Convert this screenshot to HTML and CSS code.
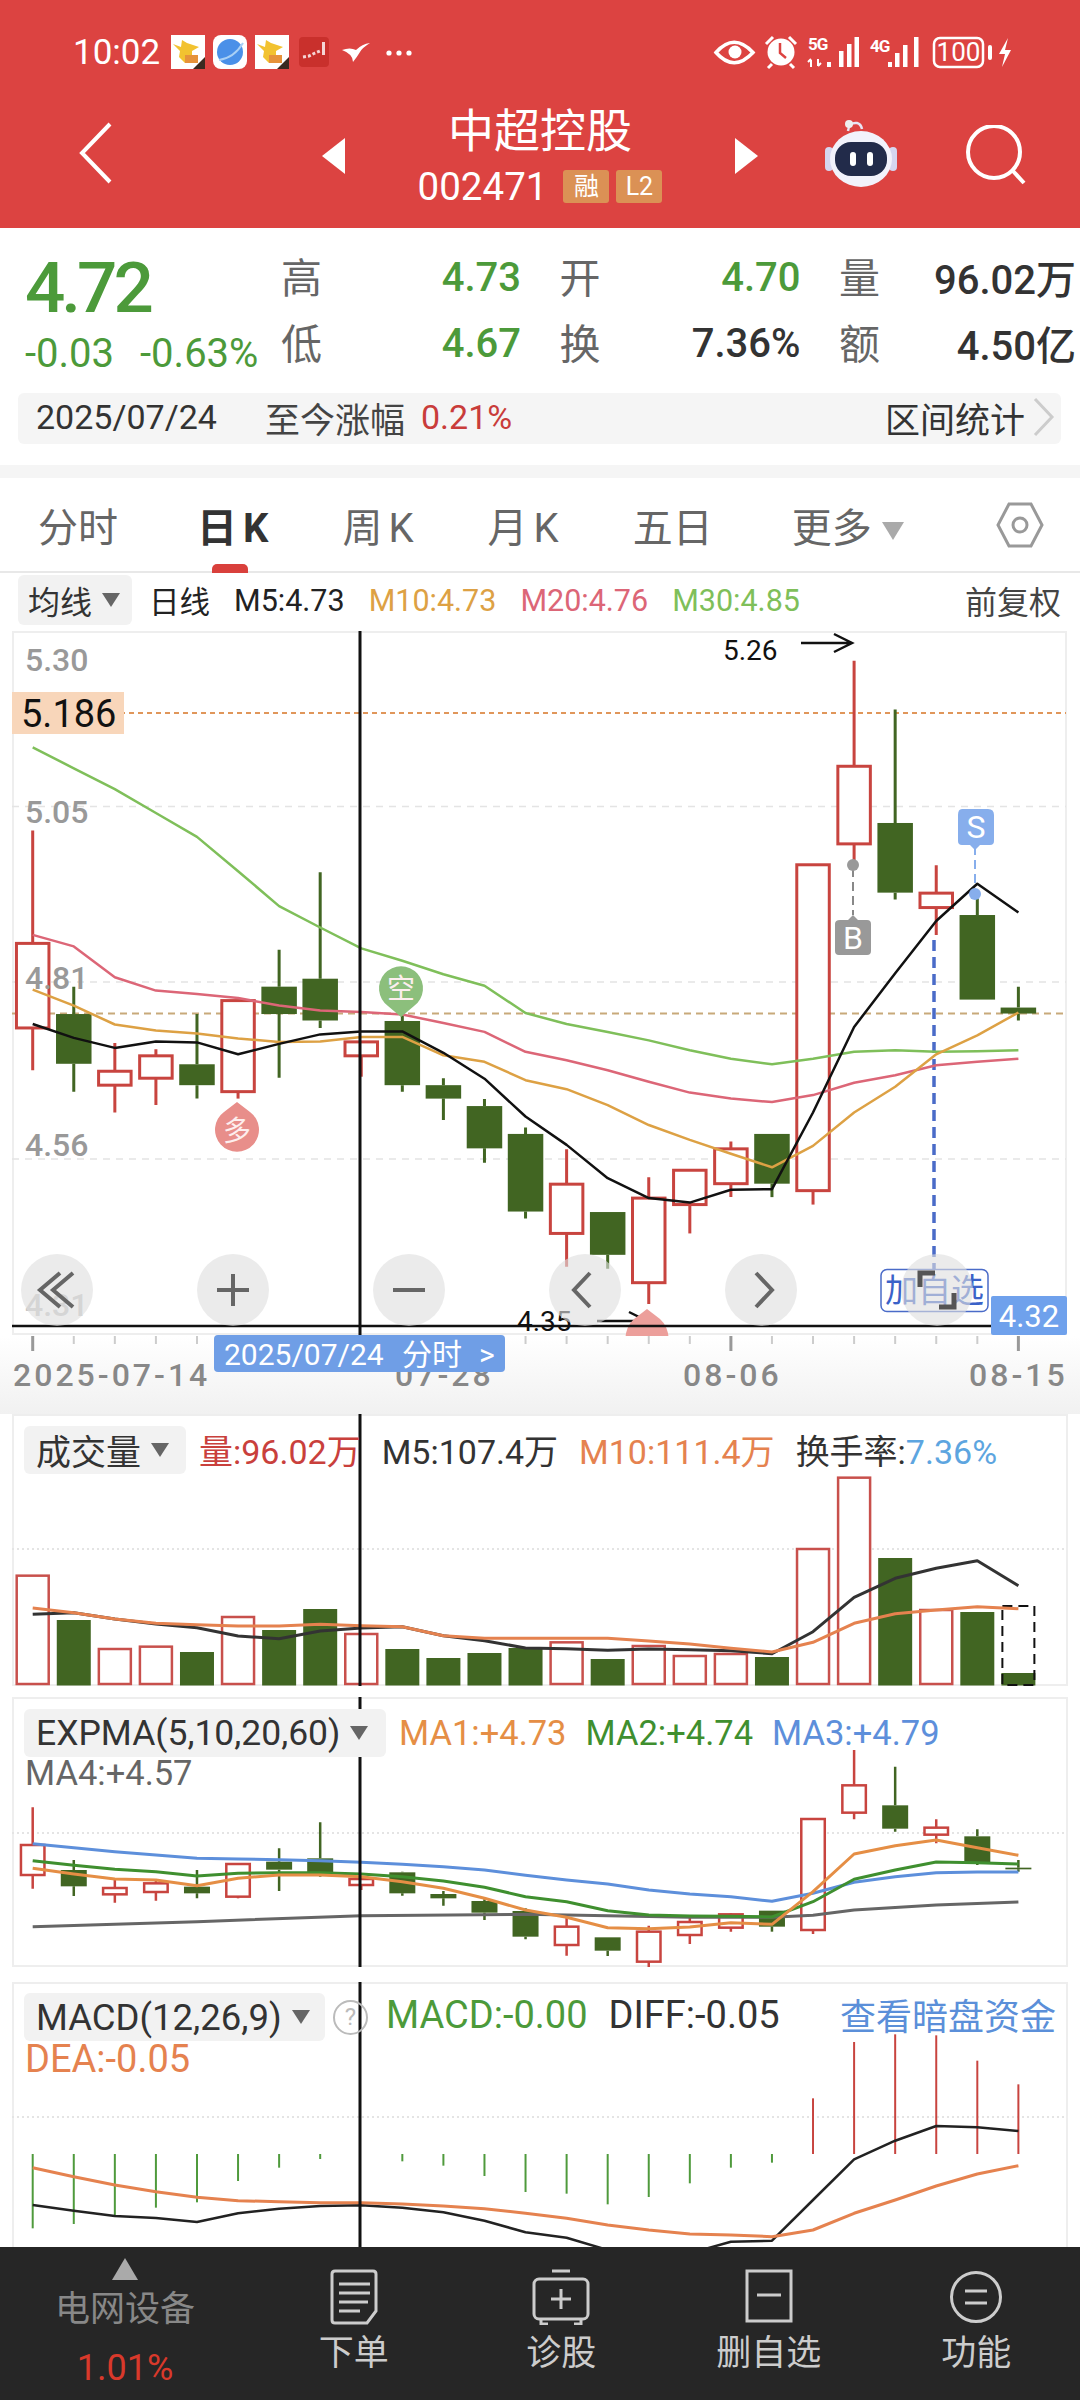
FILE: index.html
```html
<!DOCTYPE html>
<html lang="zh">
<head>
    <meta charset="utf-8">
    <title>中超控股</title>
    <link rel="stylesheet" href="styles.css">
</head>
<body>
<div id="page">
    <header class="top">
        <div class="status">
            <span class="clock">10:02</span>
            <svg class="app-icons" width="250" height="40" viewBox="0 0 250 40">
                <g id="roo">
                    <rect x="1" y="3" width="34" height="34" fill="#fff"/>
                    <path d="M3 12 L11 15 L12 8 L17 11 L29 15 L22 19 L22 24 L15 31 L9 25 L10 19 Z" fill="#f2c230"/>
                    <rect x="15" y="23" width="13" height="8" fill="#e6923a"/>
                    <path d="M35 37 L35 25 L23 37 Z" fill="#3a2a20"/>
                </g>
                <rect x="43" y="3" width="34" height="34" rx="8" fill="#fff"/>
                <circle cx="60" cy="20" r="13" fill="#4a90e8"/>
                <path d="M49 28 Q64 26 73 11" fill="none" stroke="#a9d0f5" stroke-width="2"/>
                <use href="#roo" x="84"/>
                <rect x="129" y="5" width="30" height="30" rx="4" fill="#c9302c"/>
                <path d="M133 25 L139 24 L145 21 L150 19" fill="none" stroke="#f5d5d5" stroke-width="3" stroke-dasharray="3 2"/>
                <rect x="152" y="10" width="3" height="13" fill="#f5d5d5"/>
                <path d="M172 18 Q180 15 186 18 Q192 12 200 11 Q192 16 190 20 Q187 25 183 30 Q183 22 172 18 Z" fill="#fff"/>
                <circle cx="219" cy="21" r="2.6" fill="#fff"/>
                <circle cx="229" cy="21" r="2.6" fill="#fff"/>
                <circle cx="239" cy="21" r="2.6" fill="#fff"/>
            </svg>
            <svg class="sys-icons" width="320" height="45" viewBox="0 0 320 45">
                <path d="M11 22.5 Q29 2 48 22.5 Q29 43 11 22.5 Z" fill="none" stroke="#fff" stroke-width="3.5"/>
                <circle cx="30" cy="22" r="6.5" fill="#fff"/>
                <circle cx="76" cy="22" r="13.5" fill="#fff"/>
                <path d="M75 13 V23 L81 28" fill="none" stroke="#dc4341" stroke-width="2.5"/>
                <path d="M61 14 L68 7 M91 14 L84 7 M67 34 L63 38 M85 34 L89 38" stroke="#fff" stroke-width="3"/>
                <text class="net" x="103" y="20">5G</text>
                <text class="net" x="165" y="22">4G</text>
                <path d="M106 30 V37 M103 32 L106 29 M113 29 V36 M116 33 L113 36" fill="none" stroke="#fff" stroke-width="2"/>
                <g fill="#fff">
                    <rect x="122" y="32" width="4" height="5"/>
                    <rect x="134" y="21" width="4.5" height="16"/>
                    <rect x="142" y="14" width="4.5" height="23"/>
                    <rect x="149.5" y="7" width="4.5" height="30"/>
                    <rect x="183" y="32" width="4" height="5"/>
                    <rect x="190" y="23" width="4.5" height="14"/>
                    <rect x="198" y="15" width="4.5" height="22"/>
                    <rect x="209" y="7" width="4.5" height="30"/>
                    <rect x="283" y="15" width="4" height="15" rx="2"/>
                    <path d="M303 8 L294 24 H300 L297 37 L306 20 H300 Z"/>
                </g>
                <rect x="229" y="8" width="49" height="29" rx="6" fill="none" stroke="#fff" stroke-width="2.5"/>
                <text class="batt" x="253.5" y="31">100</text>
            </svg>
        </div>
        <div class="nav">
            <svg class="back" width="34" height="62" viewBox="0 0 34 62">
                <path d="M32 2 L4 31 L32 60" fill="none" stroke="#fff" stroke-width="4"/>
            </svg>
            <span class="tri tri-left"></span>
            <div class="title">
                <div class="name">中超控股</div>
                <div class="code-row">
                    <span class="code">002471</span>
                    <span class="tag">融</span>
                    <span class="tag">L2</span>
                </div>
            </div>
            <span class="tri tri-right"></span>
            <svg class="robot" width="72" height="68" viewBox="0 0 72 68">
                <path d="M27 12 Q28 3 36 4 Q40 5 41 10" fill="none" stroke="#e8e6f5" stroke-width="2.5" transform="translate(-4 0)"/>
                <circle cx="24" cy="5" r="4" fill="#eee"/>
                <rect x="0" y="28" width="8" height="24" rx="4" fill="#d5d6f0"/>
                <rect x="64" y="28" width="8" height="24" rx="4" fill="#d5d6f0"/>
                <ellipse cx="36" cy="40" rx="31" ry="28" fill="#f2f2fb"/>
                <rect x="10" y="23" width="52" height="34" rx="16" fill="#222b4a"/>
                <rect x="25" y="33" width="6" height="14" rx="3" fill="#fff"/>
                <rect x="42" y="33" width="6" height="14" rx="3" fill="#fff"/>
            </svg>
            <svg class="search" width="60" height="60" viewBox="0 0 60 60">
                <circle cx="28" cy="27" r="26" fill="none" stroke="#fff" stroke-width="4"/>
                <path d="M47 46 L58 58" stroke="#fff" stroke-width="4"/>
            </svg>
        </div>
    </header>

    <section class="quote">
        <div class="quote-main">
            <div class="price">
                <div class="last">4.72</div>
                <div class="change"><span>-0.03</span><span>-0.63%</span></div>
            </div>
            <div class="stats">
                <div class="stat"><span class="k">高</span><span class="v green">4.73</span></div>
                <div class="stat"><span class="k">开</span><span class="v green">4.70</span></div>
                <div class="stat"><span class="k">量</span><span class="v">96.02万</span></div>
                <div class="stat"><span class="k">低</span><span class="v green">4.67</span></div>
                <div class="stat"><span class="k">换</span><span class="v">7.36%</span></div>
                <div class="stat"><span class="k">额</span><span class="v">4.50亿</span></div>
            </div>
        </div>
        <div class="range-bar">
            <span class="range-date">2025/07/24</span>
            <span class="range-label">至今涨幅</span>
            <span class="range-pct">0.21%</span>
            <span class="range-link">区间统计</span>
            <svg width="22" height="40" viewBox="0 0 22 40">
                <path d="M2 2 L19 20 L2 38" fill="none" stroke="#ccc" stroke-width="3"/>
            </svg>
        </div>
    </section>

    <nav class="tabs">
        <span class="tab tab-wide">分时</span>
        <span class="tab tab-k active">日K</span>
        <span class="tab tab-k">周K</span>
        <span class="tab tab-k">月K</span>
        <span class="tab tab-wide">五日</span>
        <span class="tab">更多<i class="caret caret-light"></i></span>
        <svg class="hex" width="48" height="46" viewBox="0 0 48 46">
            <path d="M13 2 H35 L46 23 L35 44 H13 L2 23 Z" fill="none" stroke="#999" stroke-width="3"/>
            <circle cx="24" cy="23" r="7" fill="none" stroke="#999" stroke-width="3"/>
        </svg>
    </nav>

    <div class="ma-row">
        <span class="pick pick-ma">均线<i class="caret"></i></span>
        <span class="ma ma-day">日线</span>
        <span class="ma">M5:4.73</span>
        <span class="ma c-m10">M10:4.73</span>
        <span class="ma c-m20">M20:4.76</span>
        <span class="ma c-m30">M30:4.85</span>
        <span class="ma ma-adjust">前复权</span>
    </div>

    <svg class="main-chart" width="1080" height="783" viewBox="0 631 1080 783">
        <defs>
            <linearGradient id="axis-fade" x1="0" y1="0" x2="0" y2="1">
                <stop offset="0" stop-color="#fff"/>
                <stop offset="1" stop-color="#f1f1f1"/>
            </linearGradient>
        </defs>
        <rect x="13" y="632" width="1053" height="702" fill="#fff" stroke="#eee" stroke-width="2"/>
        <path class="grid-dash" d="M12 806.5 H1066 M12 982 H1066 M12 1159 H1066"/>
        <path class="level-avg" d="M12 1013.5 H1066"/>
        <path class="level-cost" d="M12 713 H1066"/>
        <path class="blue-drop" d="M934 940 V1270"/>
        <g id="main-candles"></g>
        <text class="y-label" x="25" y="671">5.30</text>
        <text class="y-label" x="25" y="823">5.05</text>
        <text class="y-label" x="25" y="989">4.81</text>
        <text class="y-label" x="25" y="1156">4.56</text>
        <text class="y-label y-faint" x="25" y="1316">4.31</text>
        <g id="main-lines"></g>

        <rect x="12" y="692" width="112" height="42" fill="#f8d6ba"/>
        <text class="cost-label" x="21" y="727">5.186</text>

        <text class="peak-label" x="723" y="660">5.26</text>
        <path class="peak-arrow" d="M801 643 H852 M834 634 L852 643 L834 652"/>
        <text class="peak-label" x="517" y="1331">4.35</text>
        <path class="peak-arrow" d="M597 1321 H647 M629 1312 L647 1321 L629 1330"/>

        <path d="M237 1102 L250 1112 A22 22 0 1 1 224 1112 Z" fill="#e88e8a"/>
        <text class="sig-text" x="237" y="1141">多</text>
        <path d="M401 1017 L388 1006 A22 22 0 1 1 414 1006 Z" fill="#8cbf7c"/>
        <text class="sig-text" x="401" y="999">空</text>
        <path d="M647 1309 L660 1319 Q668 1326 669 1340 H625 Q626 1326 634 1319 Z" fill="#ec9f9b"/>

        <path class="sig-dash-blue" d="M975 846 V884"/>
        <circle cx="975" cy="894" r="6" fill="#87aeec"/>
        <path d="M962 809 H988 Q994 809 994 815 V841 Q994 845 990 845 H980 L975 850 L970 845 H962 Q958 845 958 841 V815 Q958 809 962 809 Z" fill="#87aeec"/>
        <text class="sig-letter" x="976" y="838">S</text>
        <path class="sig-dash-grey" d="M853 868 V915"/>
        <circle cx="853" cy="865" r="6" fill="#999"/>
        <path d="M840 920 H848 L853 915 L858 920 H867 Q871 920 871 924 V951 Q871 955 867 955 H839 Q835 955 835 951 V924 Q835 920 840 920 Z" fill="#999"/>
        <text class="sig-letter" x="853" y="949">B</text>

        <path class="day-line" d="M12 1326 H992"/>
        <path id="main-cross" class="cross" d="M360 631 V1335"/>

        <rect class="add-box" x="881" y="1269.5" width="107" height="42" rx="6"/>
        <text class="add-text" x="934.5" y="1302">加自选</text>

        <rect y="1336" width="1080" height="78" fill="url(#axis-fade)"/>
        <g id="ticks"></g>
        <text class="x-label" x="13" y="1386">2025-07-14</text>
        <text class="x-label" x="395" y="1386">07-28</text>
        <text class="x-label" x="683" y="1386">08-06</text>
        <text class="x-label" x="969" y="1386">08-15</text>

        <rect x="214" y="1335" width="291" height="37" rx="4" fill="#6f9ee6"/>
        <text class="bubble" x="224" y="1365">2025/07/24</text>
        <text class="bubble" x="402" y="1365">分时</text>
        <text class="bubble" x="479" y="1365">&gt;</text>
        <rect x="991" y="1296" width="76" height="39" rx="2" fill="#6fa1ec"/>
        <text class="last-tag" x="1029" y="1327">4.32</text>

        <g class="round-btn">
            <circle cx="57" cy="1290" r="36"/>
            <circle cx="233" cy="1290" r="36"/>
            <circle cx="409" cy="1290" r="36"/>
            <circle cx="585" cy="1290" r="36"/>
            <circle cx="761" cy="1290" r="36"/>
            <circle cx="937" cy="1290" r="36"/>
        </g>
        <g class="btn-glyph">
            <path d="M60 1273 L40 1290 L60 1307 M73 1273 L53 1290 L73 1307"/>
            <path d="M217 1290 H249 M233 1274 V1306"/>
            <path d="M393 1290 H425"/>
            <path d="M590 1273 L574 1290 L590 1307"/>
            <path d="M756 1273 L772 1290 L756 1307"/>
            <path class="glyph-thin" d="M920 1287 V1273 H935 M954 1293 V1307 H939"/>
        </g>
    </svg>

    <section class="panel panel-vol">
        <svg id="vol-chart" class="panel-svg" width="1056" height="272" viewBox="12 1414 1056 272"></svg>
        <div class="legend">
            <span class="pick pick-vol">成交量<i class="caret"></i></span>
            <span class="lg c-red">量:96.02万</span>
            <span class="lg">M5:107.4万</span>
            <span class="lg c-orange">M10:111.4万</span>
            <span class="lg">换手率:<span class="c-sky">7.36%</span></span>
        </div>
    </section>

    <section class="panel panel-exp">
        <svg id="exp-chart" class="panel-svg" width="1056" height="270" viewBox="12 1697 1056 270"></svg>
        <div class="legend">
            <span class="pick pick-exp">EXPMA(5,10,20,60)<i class="caret"></i></span>
            <span class="lg lg-ma c-ma1">MA1:+4.73</span>
            <span class="lg lg-ma c-ma2">MA2:+4.74</span>
            <span class="lg lg-ma c-ma3">MA3:+4.79</span>
        </div>
        <div class="legend-2 lg-ma4 c-ma4">MA4:+4.57</div>
    </section>

    <section class="panel panel-macd">
        <svg id="macd-chart" class="panel-svg" width="1056" height="265" viewBox="12 1982 1056 265"></svg>
        <div class="legend">
            <span class="pick pick-macd">MACD(12,26,9)<i class="caret"></i></span>
            <span class="help">?</span>
            <span class="lg lg-macd c-green">MACD:-0.00</span>
            <span class="lg lg-macd">DIFF:-0.05</span>
            <span class="lg link-dark">查看暗盘资金</span>
        </div>
        <div class="legend-2 lg-dea c-orange">DEA:-0.05</div>
    </section>

    <footer class="bottom">
        <div class="sector">
            <i class="sector-up"></i>
            <div class="sector-name">电网设备</div>
            <div class="sector-pct">1.01%</div>
        </div>
        <div class="act">
            <svg width="48" height="56" viewBox="0 0 48 56">
                <path d="M5 2 H43 Q46 2 46 5 V42 L37 54 H5 Q2 54 2 51 V5 Q2 2 5 2 Z" fill="none" stroke="#ccc" stroke-width="3"/>
                <path d="M9 15 H40 M9 24 H40 M9 33 H38 M9 42 H30" stroke="#ccc" stroke-width="3"/>
            </svg>
            <span>下单</span>
        </div>
        <div class="act">
            <svg width="58" height="56" viewBox="0 0 58 56">
                <path d="M20 2 H38" stroke="#ccc" stroke-width="3"/>
                <rect x="2" y="10" width="54" height="40" rx="5" fill="none" stroke="#ccc" stroke-width="3"/>
                <path d="M29 20 V40 M19 30 H39 M9 50 L9 55 H16 M49 50 L49 55 H42" fill="none" stroke="#ccc" stroke-width="3"/>
            </svg>
            <span>诊股</span>
        </div>
        <div class="act">
            <svg width="48" height="56" viewBox="0 0 48 56">
                <rect x="2" y="2" width="44" height="50" fill="none" stroke="#ccc" stroke-width="3"/>
                <path d="M12 26 H36" stroke="#ccc" stroke-width="3"/>
            </svg>
            <span>删自选</span>
        </div>
        <div class="act">
            <svg width="54" height="56" viewBox="0 0 54 56">
                <circle cx="27" cy="28" r="24.5" fill="none" stroke="#ccc" stroke-width="3"/>
                <path d="M16 22 H38 M16 34 H38" stroke="#ccc" stroke-width="3"/>
            </svg>
            <span>功能</span>
        </div>
    </footer>
</div>
<script src="chart.js"></script>
</body>
</html>
```

FILE: styles.css
```css
* {
    box-sizing: border-box;
}
html, body {
    margin: 0;
    padding: 0;
    background: #fff;
}
#page {
    width: 1080px;
    height: 2400px;
    overflow: hidden;
    font-family: Roboto, "Noto Sans CJK SC", sans-serif;
    color: #333;
    position: relative;
}
svg {
    display: block;
}
svg text {
    font-family: Roboto, "Noto Sans CJK SC", sans-serif;
}

/* red header */
.top {
    height: 228px;
    background: #dc4341;
    color: #fff;
}
.status {
    height: 90px;
    display: flex;
    align-items: center;
    padding: 14px 55px 0 73px;
}
.clock {
    font-size: 35px;
    width: 97px;
}
.sys-icons {
    margin-left: auto;
    margin-top: 0;
}
.net {
    font-size: 17px;
    font-weight: 700;
    fill: #fff;
    letter-spacing: -1px;
}
.batt {
    font-size: 26px;
    fill: #fff;
    text-anchor: middle;
}
.nav {
    height: 138px;
    display: flex;
    align-items: center;
}
.back {
    margin-left: 78px;
    margin-top: -12px;
}
.tri {
    width: 0;
    height: 0;
    border-top: 18px solid transparent;
    border-bottom: 18px solid transparent;
    margin-top: -7px;
}
.tri-left {
    margin-left: 210px;
    border-right: 23px solid #fff;
}
.tri-right {
    border-left: 23px solid #fff;
}
.title {
    width: 390px;
    text-align: center;
    margin-top: -8px;
}
.name {
    font-size: 46px;
    line-height: 58px;
    margin-top: -4px;
}
.code-row {
    display: flex;
    justify-content: center;
    align-items: center;
    gap: 7px;
    margin-top: 8px;
    height: 36px;
}
.code {
    font-size: 38.5px;
    margin-right: 9px;
}
.tag {
    min-width: 46px;
    height: 33px;
    line-height: 33px;
    background: #db9155;
    border-radius: 3px;
    font-size: 25px;
    text-align: center;
}
.robot {
    margin-left: 67px;
    margin-top: -12px;
}
.search {
    margin-left: 69px;
    margin-top: -8px;
}

/* quote block */
.quote {
    height: 250px;
    border-bottom: 13px solid #f5f5f5;
    position: relative;
    padding-top: 27px;
}
.quote-main {
    display: flex;
    height: 138px;
}
.price {
    width: 281px;
    padding-left: 25px;
    color: #4c9a3a;
}
.last {
    font-size: 71px;
    font-weight: 500;
    line-height: 66px;
    letter-spacing: -4px;
}
.change {
    display: flex;
    gap: 26px;
    font-size: 40px;
    margin-top: 13px;
    line-height: 40px;
}
.stats {
    display: grid;
    grid-template-columns: 240px 241px 237px;
    column-gap: 38.5px;
    grid-auto-rows: 44px;
    row-gap: 22px;
}
.stat {
    display: flex;
    justify-content: space-between;
    align-items: center;
}
.k {
    font-size: 41px;
    color: #666;
    margin-top: -5px;
}
.v {
    font-size: 40px;
    font-weight: 500;
}
.green {
    color: #4c9a3a;
}
.range-bar {
    position: absolute;
    left: 18px;
    right: 19px;
    top: 165px;
    height: 51px;
    background: #f5f5f5;
    border-radius: 6px;
    display: flex;
    align-items: center;
    padding: 0 0 3px 18px;
}
.range-date {
    font-size: 34px;
    width: 229px;
}
.range-label {
    font-size: 35px;
    color: #444;
    width: 156px;
}
.range-pct {
    font-size: 34px;
    color: #c93c3a;
}
.range-link {
    font-size: 35px;
    margin-left: auto;
    margin-right: 8px;
}
.range-bar svg {
    margin-right: 6px;
}

/* tabs */
.tabs {
    height: 95px;
    display: flex;
    align-items: center;
    gap: 68px;
    padding-left: 38px;
    border-bottom: 2px solid #e8e8e8;
}
.tab {
    font-size: 40px;
    color: #666;
    position: relative;
    white-space: nowrap;
}
.tab-k {
    letter-spacing: 6px;
}
.tab-wide {
    margin-right: 11px;
}
.tab.active {
    color: #333;
    font-weight: 700;
}
.tab.active::after {
    content: "";
    position: absolute;
    left: 15px;
    bottom: -19px;
    width: 36px;
    height: 9px;
    background: #d9403c;
    border-radius: 5px 5px 0 0;
}
.hex {
    margin-left: auto;
    margin-right: 36px;
}
.caret {
    display: inline-block;
    width: 0;
    height: 0;
    border-left: 9px solid transparent;
    border-right: 9px solid transparent;
    border-top: 14px solid #666;
    margin-left: 10px;
    vertical-align: middle;
}
.caret-light {
    border-top-color: #aaa;
    border-left-width: 11px;
    border-right-width: 11px;
    border-top-width: 18px;
}

/* MA legend above the k line */
.ma-row {
    height: 58px;
    display: flex;
    align-items: center;
    padding: 0 19px 4px 18px;
}
.pick {
    display: inline-flex;
    align-items: center;
    height: 50px;
    background: #f2f2f2;
    border-radius: 6px;
    padding: 0 12px;
    font-size: 32px;
    white-space: nowrap;
}
.pick-ma {
    width: 114px;
    padding-left: 10px;
}
.ma {
    font-size: 30.5px;
    color: #222;
    margin-left: 24px;
    white-space: nowrap;
}
.ma-day {
    margin-left: 17px;
}
.ma-adjust {
    margin-left: auto;
    color: #444;
    font-size: 32px;
}
.c-m10 { color: #dda144; }
.c-m20 { color: #dc6677; }
.c-m30 { color: #7fbf5a; }

/* main chart */
.main-chart {
    width: 1080px;
    height: 783px;
}
.grid-dash {
    stroke: #e4e4e4;
    stroke-width: 1.5;
    stroke-dasharray: 7 6;
    fill: none;
}
.level-avg {
    stroke: #c8a97a;
    stroke-width: 2;
    stroke-dasharray: 7 5;
}
.level-cost {
    stroke: #e0965a;
    stroke-width: 2;
    stroke-dasharray: 5 4;
}
.blue-drop {
    stroke: #4a6bc8;
    stroke-width: 3.5;
    stroke-dasharray: 11 6;
}
.y-label {
    font-size: 32px;
    font-weight: 500;
    fill: #999;
}
.y-faint {
    fill: #c4c4c4;
}
.cost-label {
    font-size: 38px;
    fill: #111;
}
.peak-label {
    font-size: 28px;
    fill: #111;
}
.peak-arrow {
    stroke: #111;
    stroke-width: 2.5;
    fill: none;
}
.sig-text {
    font-size: 28px;
    fill: #fdeeee;
    text-anchor: middle;
}
.sig-letter {
    font-size: 32px;
    fill: #fff;
    text-anchor: middle;
}
.sig-dash-blue {
    stroke: #87aeec;
    stroke-width: 2;
    stroke-dasharray: 9 5;
}
.sig-dash-grey {
    stroke: #888;
    stroke-width: 2;
    stroke-dasharray: 9 5;
}
.day-line {
    stroke: #111;
    stroke-width: 2.5;
}
.cross {
    stroke: #111;
    stroke-width: 3;
}
.add-box {
    fill: #fff;
    stroke: #4a6bc8;
    stroke-width: 1.5;
}
.add-text {
    font-size: 33px;
    fill: #3b62c8;
    text-anchor: middle;
}
.x-label {
    font-size: 32px;
    font-weight: 500;
    fill: #888;
    letter-spacing: 3px;
}
.bubble {
    font-size: 30px;
    fill: #fff;
}
.last-tag {
    font-size: 31px;
    fill: #fff;
    text-anchor: middle;
}
.round-btn circle {
    fill: rgba(222, 222, 222, 0.62);
}
.btn-glyph path {
    fill: none;
    stroke: #666;
    stroke-width: 4;
}
.btn-glyph .glyph-thin {
    stroke: #555;
    stroke-width: 5;
}

/* lower panels */
.panel {
    position: relative;
    margin: 0 12px;
    width: 1056px;
    overflow: hidden;
}
.panel-vol {
    height: 272px;
}
.panel-exp {
    height: 270px;
    margin-top: 11px;
}
.panel-macd {
    height: 265px;
    margin-top: 15px;
}
.panel-svg {
    position: absolute;
    left: 0;
    top: 0;
}
.legend {
    position: relative;
    display: flex;
    align-items: center;
    padding: 11px 0 0 12px;
    font-size: 34px;
    white-space: nowrap;
}
.panel-exp .legend {
    padding-top: 12px;
}
.lg {
    margin-left: 21px;
}
.legend .pick + .lg {
    margin-left: 13px;
}
.lg-ma {
    font-size: 34.5px;
    margin-left: 19px;
}
.pick-vol {
    width: 162px;
    height: 48px;
    font-size: 35px;
}
.pick-exp {
    width: 362px;
    height: 48px;
    font-size: 35.5px;
}
.pick-macd {
    width: 301px;
    height: 48px;
    font-size: 36.5px;
}
.legend-2 {
    position: relative;
    padding-left: 13px;
    font-size: 34px;
    line-height: 40px;
}
.lg-ma4 {
    font-size: 34.5px;
    margin-top: -4px;
}
.lg-dea {
    font-size: 38px;
    line-height: 40px;
    margin-top: -2px;
}
.lg-macd {
    font-size: 38px;
    margin-top: -4px;
}
.help {
    width: 35px;
    height: 35px;
    margin-left: 8px;
    border: 2px solid #bbb;
    border-radius: 50%;
    color: #bbb;
    font-size: 24px;
    line-height: 31px;
    text-align: center;
}
.legend .help + .lg {
    margin-left: 18px;
}
.link-dark {
    color: #5b8fd9;
    font-size: 36px;
    margin-left: auto;
    margin-right: 12px;
    margin-top: -7px;
}
.c-red { color: #c9403c; }
.c-orange { color: #e5824f; }
.c-sky { color: #5da5e0; }
.c-green { color: #4c9a3a; }
.c-ma1 { color: #e58e45; }
.c-ma2 { color: #3f8f2f; }
.c-ma3 { color: #5d8fdb; }
.c-ma4 { color: #666; }

/* bottom action bar */
.bottom {
    position: absolute;
    left: 0;
    top: 2247px;
    width: 1080px;
    height: 153px;
    background: #262626;
    display: grid;
    grid-template-columns: 250px repeat(4, 1fr);
}
.sector {
    text-align: center;
    position: relative;
}
.sector-up {
    display: block;
    width: 0;
    height: 0;
    margin: 11px auto 0;
    border-left: 13px solid transparent;
    border-right: 13px solid transparent;
    border-bottom: 22px solid #aaa;
}
.sector-name {
    font-size: 35px;
    color: #888;
    line-height: 44px;
    margin-top: 8px;
}
.sector-pct {
    font-size: 36px;
    color: #d9392b;
    line-height: 44px;
    margin-top: 14px;
}
.act {
    display: flex;
    flex-direction: column;
    align-items: center;
    color: #ccc;
    font-size: 35px;
    padding-top: 22px;
}
.act span {
    margin-top: 6px;
    line-height: 46px;
}
```

FILE: chart.js
```js
// x of every trading day, same for all panels
function dayX(i) {
    return 32.7 + 41.07 * i;
}

var RED = '#c8443f';
var GREEN = '#416522';
var NS = 'http://www.w3.org/2000/svg';

var isUp = [1, 0, 1, 1, 0, 1, 0, 0, 1, 0, 0, 0, 0, 1, 0, 1, 1, 1, 0, 1, 1, 0, 1, 0, 0];

function add(parent, tag, attrs) {
    var el = document.createElementNS(NS, tag);
    for (var k in attrs) {
        el.setAttribute(k, attrs[k]);
    }
    parent.appendChild(el);
    return el;
}

function drawCandles(parent, rows, toY, width, stroke) {
    rows.forEach(function (r, i) {
        var x = dayX(i);
        var col = isUp[i] ? RED : GREEN;
        add(parent, 'path', {
            d: 'M' + x + ' ' + toY(r[0]) + ' V' + toY(r[1]) + ' M' + x + ' ' + toY(r[2]) + ' V' + toY(r[3]),
            stroke: col,
            'stroke-width': stroke
        });
        if (isUp[i]) {
            add(parent, 'rect', {
                x: x - width / 2 + stroke / 2,
                y: toY(r[1]),
                width: width - stroke,
                height: toY(r[2]) - toY(r[1]),
                fill: '#fff',
                stroke: col,
                'stroke-width': stroke
            });
        } else {
            add(parent, 'rect', {
                x: x - width / 2,
                y: toY(r[1]),
                width: width,
                height: toY(r[2]) - toY(r[1]),
                fill: col
            });
        }
    });
}

function drawLine(parent, values, toY, color, width, days) {
    var pts = values.map(function (v, i) {
        return dayX(days ? days[i] : i).toFixed(1) + ',' + toY(v).toFixed(1);
    });
    add(parent, 'polyline', {
        points: pts.join(' '),
        fill: 'none',
        stroke: color,
        'stroke-width': width,
        'stroke-linejoin': 'round'
    });
}

function drawFrame(svg, x, y, w, h) {
    add(svg, 'rect', { x: x, y: y, width: w, height: h, fill: '#fff', stroke: '#eee', 'stroke-width': 2 });
}

function drawGrid(svg, y) {
    add(svg, 'path', { d: 'M12 ' + y + ' H1066', stroke: '#e4e4e4', 'stroke-width': 2, 'stroke-dasharray': '2 3' });
}

function drawCross(svg, y1, y2) {
    add(svg, 'path', { d: 'M360 ' + y1 + ' V' + y2, stroke: '#111', 'stroke-width': 3 });
}

/* ---- main k line ---- */
function mainY(v) {
    return 620 + v / 2.01;
}

var mainRows = [
    [423, 650, 820, 905], [737, 792, 892, 948], [850, 907, 935, 990], [863, 876, 921, 975], [792, 893, 935, 962],
    [765, 765, 948, 962], [663, 737, 792, 920], [507, 721, 805, 820], [848, 848, 876, 918], [790, 806, 935, 948],
    [921, 935, 962, 1005], [963, 977, 1062, 1091], [1020, 1033, 1189, 1203], [1064, 1134, 1233, 1300], [1190, 1190, 1276, 1304],
    [1120, 1162, 1332, 1375], [1106, 1106, 1175, 1233], [1048, 1063, 1133, 1160], [1033, 1033, 1133, 1160], [492, 492, 1147, 1175],
    [82, 294, 450, 492], [180, 408, 548, 562], [493, 549, 578, 633], [550, 593, 763, 763], [737, 779, 791, 805]
];
var m5 = [812, 840, 860, 847, 849, 873, 852, 833, 827, 827, 870, 922, 998, 1055, 1122, 1162, 1171, 1145, 1144, 990, 818, 710, 605, 530, 588];
var m10 = [743, 775, 813, 825, 831, 841, 848, 847, 838, 838, 875, 888, 925, 943, 975, 1015, 1045, 1073, 1100, 1057, 990, 938, 873, 835, 789];
var m20 = [633, 656, 718, 745, 752, 760, 775, 785, 788, 793, 810, 828, 868, 885, 905, 928, 950, 962, 969, 955, 930, 915, 895, 888, 882];
var m30 = [256, 298, 340, 388, 436, 505, 575, 618, 660, 685, 712, 735, 790, 812, 828, 845, 865, 882, 893, 882, 868, 865, 868, 867, 865];

drawCandles(document.getElementById('main-candles'), mainRows, mainY, 35.5, 3);
var mainLines = document.getElementById('main-lines');
drawLine(mainLines, m30, mainY, '#7fbf5a', 2.5);
drawLine(mainLines, m20, mainY, '#dc6677', 2.5);
drawLine(mainLines, m10, mainY, '#dda144', 2.5);
drawLine(mainLines, m5, mainY, '#111', 2.5);

var ticks = document.getElementById('ticks');
isUp.forEach(function (u, i) {
    var major = i === 0 || i === 10 || i === 17 || i === 24;
    add(ticks, 'path', {
        d: 'M' + dayX(i) + ' 1336 V' + (major ? 1351 : 1344),
        stroke: major ? '#999' : '#ccc',
        'stroke-width': major ? 3 : 2
    });
});

/* ---- volume ---- */
function volY(v) {
    return 1400 + v / 3;
}
var volSvg = document.getElementById('vol-chart');
var volTops = [527, 660, 747, 740, 756, 651, 690, 627, 702, 747, 774, 759, 744, 727, 777, 738, 768, 762, 771, 447, 233, 474, 630, 636, 819];
var volM5 = [643, 638, 657, 672, 683, 708, 716, 693, 684, 680, 707, 722, 744, 746, 751, 747, 749, 752, 761, 695, 592, 535, 505, 482, 557];
var volM10 = [624, 638, 657, 670, 674, 678, 678, 673, 677, 680, 707, 715, 715, 715, 715, 723, 732, 745, 756, 727, 670, 641, 630, 620, 626];

drawFrame(volSvg, 13, 1415, 1054, 270);
drawGrid(volSvg, 1549);
volTops.forEach(function (t, i) {
    var x = dayX(i);
    var y = volY(t);
    if (isUp[i]) {
        add(volSvg, 'rect', { x: x - 16, y: y, width: 32, height: 1684 - y, fill: '#fff', stroke: '#c8504c', 'stroke-width': 2.5 });
    } else {
        add(volSvg, 'rect', { x: x - 17, y: y, width: 34, height: 1685.5 - y, fill: GREEN });
    }
});
add(volSvg, 'rect', { x: dayX(24) - 16, y: 1606, width: 32, height: 79, fill: 'none', stroke: '#111', 'stroke-width': 2, 'stroke-dasharray': '10 6' });
drawLine(volSvg, volM5, volY, '#333', 3);
drawLine(volSvg, volM10, volY, '#e5824f', 3);
drawCross(volSvg, 1414, 1686);

/* ---- expma ---- */
function expY(v) {
    return 1680 + v / 3;
}
var expSvg = document.getElementById('exp-chart');
var expRows = [
    [382, 495, 585, 626], [540, 570, 619, 648], [600, 624, 643, 668], [600, 610, 636, 662], [570, 620, 640, 655],
    [552, 552, 650, 655], [505, 545, 569, 633], [427, 535, 577, 590], [588, 597, 615, 630], [575, 577, 640, 647],
    [633, 642, 655, 677], [658, 663, 698, 720], [685, 693, 770, 778], [708, 740, 795, 827], [772, 772, 812, 828],
    [737, 755, 845, 862], [710, 726, 765, 792], [700, 703, 743, 755], [692, 692, 740, 755], [417, 417, 750, 762],
    [210, 316, 398, 418], [260, 376, 446, 455], [418, 443, 464, 490], [448, 469, 552, 555], [540, 563, 568, 575]
];
var ma1 = [565, 582, 597, 600, 617, 595, 585, 585, 590, 605, 625, 655, 690, 712, 743, 746, 741, 728, 733, 635, 522, 497, 480, 503, 526];
var ma2 = [542, 556, 568, 575, 588, 580, 578, 578, 582, 590, 603, 622, 650, 665, 692, 705, 708, 709, 711, 665, 598, 570, 546, 548, 552];
var ma3 = [491, 503, 515, 525, 535, 537, 539, 542, 547, 553, 560, 570, 586, 600, 612, 630, 642, 650, 664, 640, 607, 590, 578, 576, 576];
var ma4 = [740, 725, 707, 703, 712, 712, 706, 690, 675, 666];
var ma4Days = [0, 4, 8, 12, 16, 18, 19, 20, 22, 24];

drawFrame(expSvg, 13, 1698, 1054, 268);
drawGrid(expSvg, 1833);
drawCandles(expSvg, expRows, expY, 26, 2.5);
drawLine(expSvg, ma4, expY, '#666', 3, ma4Days);
drawLine(expSvg, ma3, expY, '#5d8fdb', 3);
drawLine(expSvg, ma2, expY, '#3f8f2f', 3);
drawLine(expSvg, ma1, expY, '#e58e45', 3);
drawCross(expSvg, 1697, 1967);

/* ---- macd ---- */
function macdY(v) {
    return 1970 + v / 3;
}
var macdSvg = document.getElementById('macd-chart');
var hist = [775, 762, 735, 713, 697, 633, 593, 567, 552, 574, 587, 618, 666, 671, 703, 681, 640, 593, 578, 385, 216, 193, 196, 272, 343];
var diff = [705, 722, 738, 744, 756, 730, 716, 708, 706, 713, 727, 752, 787, 803, 840, 850, 850, 815, 812, 690, 568, 512, 468, 472, 483];
var dea = [593, 620, 645, 665, 682, 692, 695, 698, 698, 702, 708, 716, 730, 745, 765, 780, 792, 795, 800, 780, 730, 690, 648, 612, 587];

drawFrame(macdSvg, 13, 1983, 1054, 280);
drawGrid(macdSvg, 2117);
hist.forEach(function (h, i) {
    add(macdSvg, 'path', {
        d: 'M' + dayX(i) + ' 2154 V' + macdY(h),
        stroke: h < 552 ? RED : '#4f9a3c',
        'stroke-width': 2
    });
});
drawLine(macdSvg, diff, macdY, '#222', 2.5);
drawLine(macdSvg, dea, macdY, '#e5824f', 3);
drawCross(macdSvg, 1982, 2247);
```
